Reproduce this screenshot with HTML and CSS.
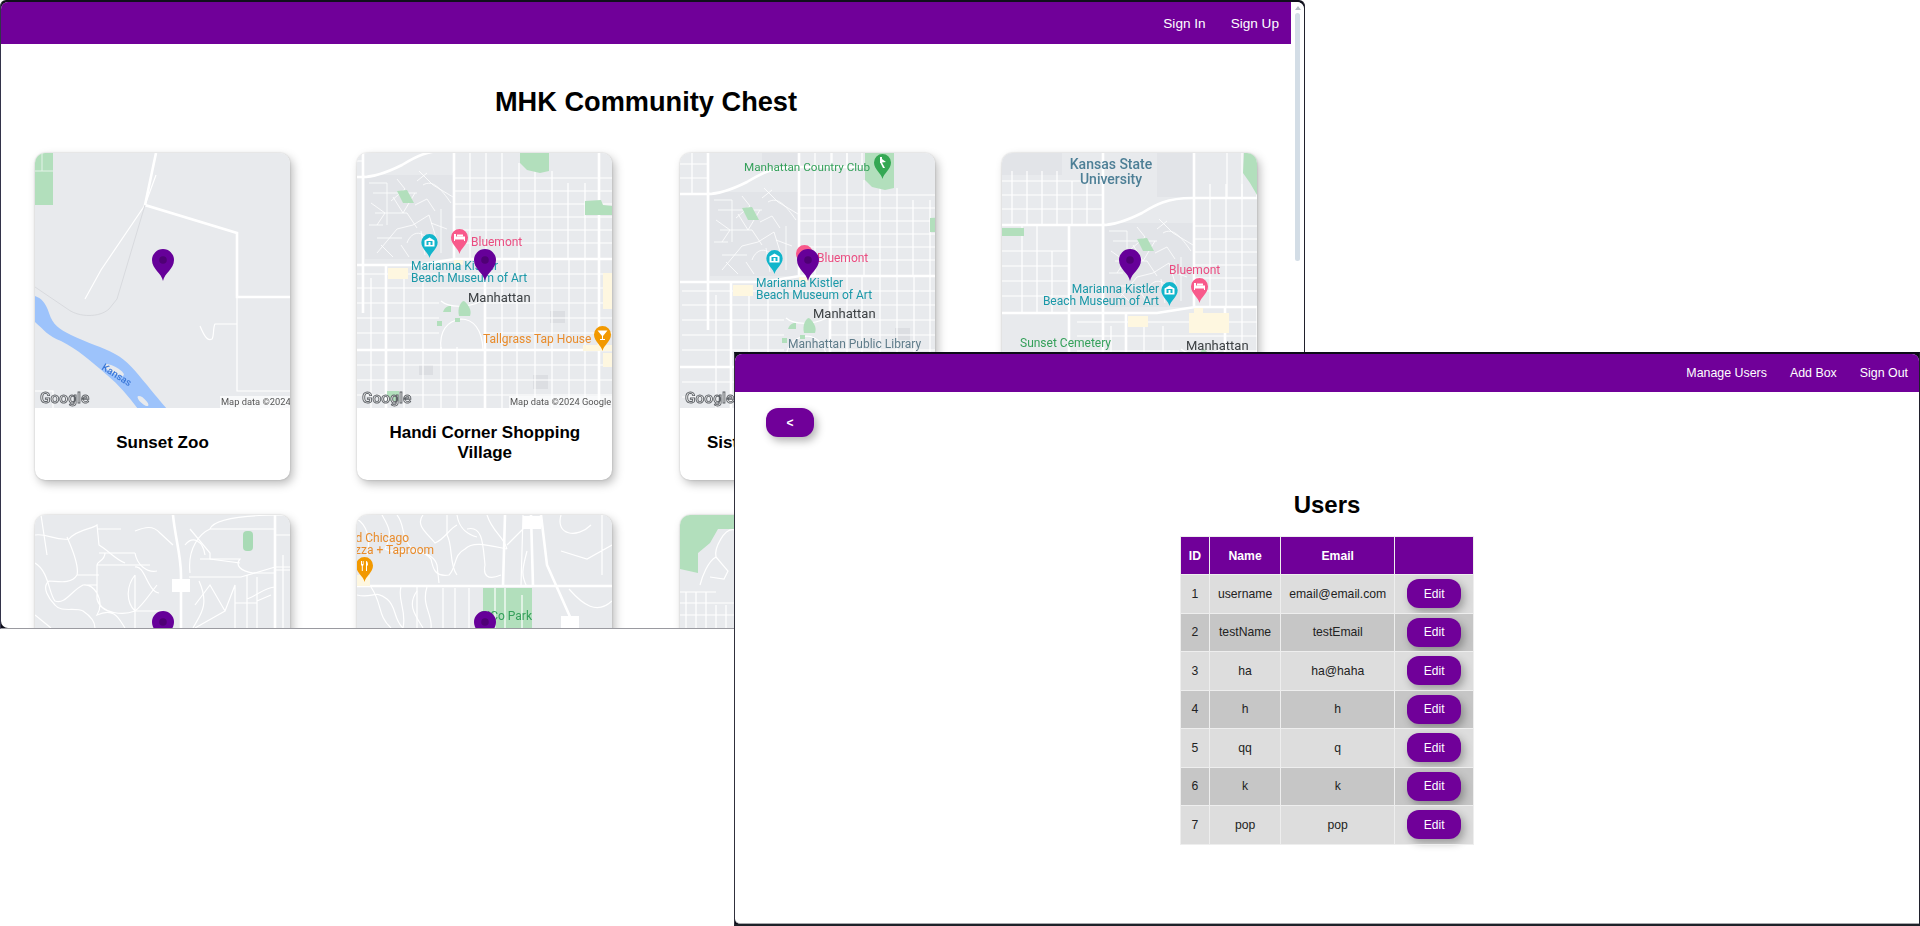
FILE: index.html
```html
<!DOCTYPE html>
<html lang="en">
<head>
<meta charset="utf-8">
<title>MHK Community Chest</title>
<link rel="stylesheet" href="styles.css">
</head>
<body>
<svg class="defs" aria-hidden="true">
  <defs>
    <symbol id="pin" viewBox="0 0 22 32" overflow="visible">
      <path class="pin-body" d="M11 32C9.500 24 0 20 0 11A11 11 0 1 1 22 11C22 20 12.500 24 11 32Z"/>
      <circle class="pin-dot" cx="11" cy="11" r="3.800"/>
    </symbol>
    <symbol id="poi-shape" viewBox="0 0 17 25">
      <path d="M8.500 25C7.500 19.500 0 15.500 0 8.500A8.500 8.500 0 1 1 17 8.500C17 15.500 9.500 19.500 8.500 25Z"/>
    </symbol>
    <g id="glyph-museum"><path class="glyph" d="M3.500 6.500 8.500 3.500 13.500 6.500V12.500H3.500Z"/><rect class="glyph-cut" x="5.500" y="7" width="6" height="4"/><rect class="glyph" x="7.500" y="8" width="2" height="3"/></g>
    <g id="glyph-bed"><path class="glyph" d="M3 5H5V7.500H14V12H13V10.500H4V12H3Z"/><rect class="glyph" x="6" y="5.500" width="6" height="2"/></g>
    <g id="glyph-bar"><path class="glyph" d="M3.500 4.500H13.500L9 10V13H11V14H6V13H8V10Z"/></g>
    <g id="glyph-golf"><path class="glyph" d="M6 3H8V5L12 8 8 8.500 11 14H9L6.500 9H6Z"/></g>
    <g id="glyph-food"><path class="glyph" d="M5 4H6V7H6.800V4H7.600V8L6.800 9V14H5.800V9L5 8ZM10 4C11.500 4 12 6 12 8.500H11V14H10Z"/></g>

    <g id="town">
      <rect class="m-campus" x="8" y="22" width="88" height="84"/>
      <rect class="m-campus" x="-95" y="-48" width="60" height="22"/>
      <rect class="m-campus" x="60" y="-48" width="36" height="44"/>
      <rect class="m-block" x="193" y="158" width="15" height="12"/>
      <rect class="m-block" x="176" y="222" width="15" height="14"/>
      <rect class="m-block" x="62" y="212" width="14" height="10"/>
      <path class="m-thin" d="M97 25H256M97 38H256M97 51H256M97 64H256M97 77H256M97 90H256M113 -17V106M129 -17V106M145 -17V106M162 10V106M178 18V106M195 18V106M211 30V106M228 30V106"/>
      <path class="m-thin" d="M-20 121H260M-20 135H260M-20 150H260M-20 165H260M-20 180H260M-20 212H260M-20 227H260M-20 242H260M145 106V260M160 106V260M178 106V260M195 106V260M212 106V260M228 106V260M47 125V260M66 125V260M84 180V260M100 180V260M14 125V260"/>
      <path class="m-thin" d="M-95 50H-28M-95 65H-28M-95 80H-28M-95 95H-28M-75 24V112M-60 24V112M-45 50V112M-85 -30V24M-70 -30V24M-55 -30V24M-40 -30V24M-25 -20V24M-10 -20V24M-95 -20H6M-95 -6H6M-95 8H6M130 -48V-3M145 -48V-3M160 -48V-3"/>
      <rect class="m-base" x="82" y="146" width="45" height="48"/>
      <path class="m-thin" d="M84 196C82 178 90 168 104 166C116 166 125 176 126 196M84 148C92 155 110 155 125 148"/>
      <path class="m-fine" d="M16 40H60M18 60H50L60 75M20 85H45M30 30V72M62 18 76 32 96 44M66 32C76 26 84 36 94 50M20 100 40 76 56 72 72 62 80 88M50 90C54 78 68 74 76 96M64 78 68 102M36 44 46 60 58 40M12 72H26M84 56V100M70 20 60 28M14 50 28 60 20 72M40 26 48 36 34 48M58 52 70 46 78 58M44 92 52 104M24 92 36 104M74 70 90 76M12 30H30"/>
      <path class="m-thick" d="M-120 24H5C20 24 35 17 45 12C58 4 70-3 95-3H170M-120 112H60L98 106H270M-60 197H270M97-60V106M6-60V160M-28 24V160M29 112V260M128 106V260M242 -30V260"/>
      <path class="m-green" d="M40 38 50 37 57 50H46Z"/>
      <path class="m-green" d="M163 -17H192V18L183 20 170 17 163 10Z"/>
      <path class="m-green" d="M228 48 244 47 246 52 256 53V62H228Z"/>
      <path class="m-green" d="M86 159C88 153 92 153 94 153V159Z"/>
      <path class="m-green" d="M102 163C100 155 104 148 107 148C112 152 115 158 113 163Z"/>
      <rect class="m-green" x="80" y="168" width="5" height="5"/>
      <rect class="m-green" x="98" y="165" width="5" height="4"/>
      <rect class="m-yellow" x="31" y="115" width="20" height="11"/>
      <rect class="m-yellow" x="97" y="107" width="9" height="5"/>
      <rect class="m-yellow" x="246" y="120" width="10" height="36"/>
      <rect class="m-yellow" x="226" y="192" width="30" height="6"/>
      <rect class="m-yellow" x="246" y="200" width="10" height="14"/>
    </g>
  </defs>
</svg>

<div class="desktop">
  <section class="window window-back">
    <div class="window-inner">
      <div class="viewport">
        <header class="topbar topbar-tall">
          <nav class="nav nav-large"><a class="nav-link">Sign In</a><a class="nav-link">Sign Up</a></nav>
        </header>
        <h1 class="page-title">MHK Community Chest</h1>
        <div class="card-grid">

          <article class="card">
            <svg class="map" viewBox="0 0 255 255">
              <rect class="m-base" width="255" height="255"/>
              <path class="m-green" d="M0 0H18V52H0Z"/>
              <path class="m-thin-light" d="M7 0V18M0 18H18"/>
              <path class="m-river" d="M0 143C6 145 11 150 14 160C18 172 24 176 36 182C52 190 68 194 80 201C92 207 100 218 112 232C120 242 126 249 132 256H103C94 244 84 232 72 222C56 208 42 196 26 188C14 184 8 176 0 169Z"/>
              <ellipse class="m-base" cx="79" cy="217" rx="11" ry="3.500" transform="rotate(28 79 217)"/>
              <ellipse class="m-base" cx="108" cy="248" rx="7" ry="2.500" transform="rotate(42 108 248)"/>
              <path class="m-thick" d="M121 0 110 52 202 80V144H255"/>
              <path class="m-thin" d="M202 144V238H255M121 22 110 52 66 117 50 146M165 173C170 185 173 188 177 186 179 184 178 174 180 171H202M0 238H18V256"/>
              <path class="m-grey-line" d="M0 134 34 157C44 164 64 165 74 156L82 146 110 52"/>
              <text class="map-label label-river" transform="translate(66 216) rotate(32)">Kansas</text>
              <rect class="attr-bg" x="185" y="243" width="70" height="12"/>
              <text class="map-attr" x="186" y="252">Map data ©2024</text>
              <text class="map-logo" x="5" y="250">Google</text>
              <use href="#pin" x="117" y="96" width="22" height="32"/>
            </svg>
            <h2 class="card-title">Sunset Zoo</h2>
          </article>

          <article class="card">
            <svg class="map" viewBox="0 0 255 255">
              <rect class="m-base" width="255" height="255"/>
              <use href="#town"/>
              <use href="#poi-shape" class="poi-teal" x="64" y="81" width="17" height="24"/>
              <use href="#glyph-museum" x="64" y="81"/>
              <use href="#poi-shape" class="poi-pink" x="94" y="76" width="17" height="25"/>
              <use href="#glyph-bed" x="94" y="76"/>
              <use href="#poi-shape" class="poi-orange" x="237" y="173" width="17" height="25"/>
              <use href="#glyph-bar" x="237" y="173"/>
              <text class="map-label label-pink" x="114" y="93">Bluemont</text>
              <text class="map-label label-teal" x="54" y="117">Marianna Kistler</text>
              <text class="map-label label-teal" x="54" y="129">Beach Museum of Art</text>
              <text class="map-label label-town" x="111" y="149">Manhattan</text>
              <text class="map-label label-orange" x="126" y="190">Tallgrass Tap House</text>
              <rect class="attr-bg" x="152" y="243" width="103" height="12"/>
              <text class="map-attr" x="153" y="252">Map data ©2024 Google</text>
              <path class="m-green" d="M30 238H42V248H30Z"/>
              <text class="map-logo" x="5" y="250">Google</text>
              <use href="#pin" x="117" y="96" width="22" height="32"/>
            </svg>
            <h2 class="card-title">Handi Corner Shopping Village</h2>
          </article>

          <article class="card">
            <svg class="map" viewBox="0 0 255 255">
              <rect class="m-base" width="255" height="255"/>
              <use href="#town" transform="translate(22 17)"/>
              <use href="#poi-shape" class="poi-green" x="194" y="1" width="17" height="25"/>
              <use href="#glyph-golf" x="194" y="1"/>
              <use href="#poi-shape" class="poi-teal" x="86" y="97" width="17" height="24"/>
              <use href="#glyph-museum" x="86" y="97"/>
              <use href="#poi-shape" class="poi-pink" x="116" y="92" width="17" height="25"/>
              <text class="map-label label-green label-tight" x="64" y="18">Manhattan Country Club</text>
              <text class="map-label label-pink" x="137" y="109">Bluemont</text>
              <text class="map-label label-teal" x="76" y="134">Marianna Kistler</text>
              <text class="map-label label-teal" x="76" y="146">Beach Museum of Art</text>
              <text class="map-label label-town" x="133" y="165">Manhattan</text>
              <text class="map-label label-slate" x="108" y="195">Manhattan Public Library</text>
              <text class="map-logo" x="5" y="250">Google</text>
              <use href="#pin" x="117" y="96" width="22" height="32"/>
            </svg>
            <h2 class="card-title">Sisters Memorial Garden</h2>
          </article>

          <article class="card">
            <svg class="map" viewBox="0 0 255 255">
              <rect class="m-base" width="255" height="255"/>
              <use href="#town" transform="translate(95 48)"/>
              <path class="m-green" d="M0 75H22V83H0Z"/>
              <path class="m-green" d="M242 0H255V42L248 30 241 20Z"/>
              <rect class="m-yellow" x="187" y="160" width="40" height="20"/>
              <use href="#poi-shape" class="poi-teal" x="159" y="129" width="17" height="24"/>
              <use href="#glyph-museum" x="159" y="129"/>
              <use href="#poi-shape" class="poi-pink" x="189" y="125" width="17" height="25"/>
              <use href="#glyph-bed" x="189" y="125"/>
              <text class="map-label label-uni" x="109" y="16">Kansas State</text>
              <text class="map-label label-uni" x="109" y="31">University</text>
              <text class="map-label label-pink" x="167" y="121">Bluemont</text>
              <text class="map-label label-teal label-end" x="157" y="140">Marianna Kistler</text>
              <text class="map-label label-teal label-end" x="157" y="152">Beach Museum of Art</text>
              <text class="map-label label-green" x="18" y="194">Sunset Cemetery</text>
              <text class="map-label label-town" x="184" y="197">Manhattan</text>
              <use href="#pin" x="117" y="96" width="22" height="32"/>
            </svg>
            <h2 class="card-title"></h2>
          </article>

          <article class="card">
            <svg class="map" viewBox="0 0 255 255">
              <rect class="m-base" width="255" height="255"/>
              <rect class="m-green-pill" x="208" y="16" width="10" height="20" rx="4"/>
              <path class="m-thin" d="M0 20C12 18 20 26 34 24C42 14 58 14 62 10L64 30C74 36 80 44 90 48M62 14H86M70 38C70 46 62 46 62 50H115M0 48C14 56 14 80 20 86C30 90 36 76 48 70H62M48 70C60 68 70 86 62 100 80 92 84 104 90 113M62 50V84C66 100 90 100 100 96C108 90 114 80 122 70M100 52C110 50 112 76 124 78M155 58C152 32 166 18 175 14 178 6 196 0 250 0M175 14H240M154 62H206L240 52H255M155 14 175 38V44L205 48M160 90 175 70 190 96 160 113M190 96 200 70V113M200 88H222M222 62V113M222 86 236 80M100 113V96"/>
              <path class="m-thin" d="M32 22C40 40 44 52 42 60C36 70 22 66 14 66C6 72 14 84 20 90C26 98 40 92 48 96C54 100 60 106 60 113M42 60H64M64 38H100M100 38C102 50 112 58 122 56M100 16C110 12 118 10 125 18L138 30M100 60V96M100 60C92 70 90 86 100 96H128M150 30C158 20 168 26 170 40M165 44H205C200 50 205 56 218 58H240M164 66C175 90 165 100 158 113M212 60V113M212 84C220 82 230 72 240 72M240 20H255M240 55H255M248 40V113M6 0 12 40M0 100 16 113"/>
              <path class="m-thick" d="M138 0C140 22 146 40 146 60V113M240 0V113"/>
              <rect class="m-road-box" x="137" y="64" width="18" height="13"/>
              <use href="#pin" x="117" y="96" width="22" height="32"/>
            </svg>
            <h2 class="card-title"></h2>
          </article>

          <article class="card">
            <svg class="map" viewBox="0 0 255 255">
              <rect class="m-base" width="255" height="255"/>
              <path class="m-green" d="M126 73H175V113H126Z"/>
              <path class="m-thin" d="M25 0C32 12 36 18 28 34 44 42 60 28 74 44 76 54 78 62 92 60 100 52 96 40 108 34 116 26 130 30 150 34M66 0C58 10 70 18 78 28 88 24 92 14 100 10M100 0C102 14 112 20 120 22M130 0C136 18 146 20 150 34M0 80C16 84 18 74 30 84 40 92 36 104 46 113M86 73V113M98 73V113M112 73V113M60 76C50 90 58 100 66 113M148 73V113M138 73V113M165 80V113M204 0C198 20 220 24 234 10M204 36 230 44 255 30M212 74C226 90 240 100 255 86M245 0V60M170 36C165 55 164 60 170 72"/>
              <path class="m-thin" d="M0 4C10 10 14 24 10 40M40 0C48 10 44 20 52 30C60 40 76 36 80 50L82 68M90 0V20C96 30 92 50 100 60M110 14C126 10 126 30 128 50C126 60 130 66 144 60M14 72C26 90 20 100 34 113M44 72C40 84 50 96 46 113M60 72V113M70 72C64 90 76 100 74 113"/>
              <path class="m-thick" d="M0 71H255M148 0 146 71M174 0 176 71M184 0 190 50 218 113"/>
              <path class="m-thin" d="M166 0 164 71M172 8 150 30"/>
              <rect class="m-road-box" x="166" y="1" width="18" height="13"/>
              <rect class="m-road-box" x="204" y="101" width="18" height="12"/>
              <rect class="m-yellow" x="0" y="60" width="13" height="11"/>
              <text class="map-label label-orange label-end" x="52" y="27">Old Chicago</text>
              <text class="map-label label-orange label-end" x="77" y="39">Pizza + Taproom</text>
              <use href="#poi-shape" class="poi-orange" x="-1" y="42" width="17" height="25"/>
              <use href="#glyph-food" x="-1" y="42"/>
              <text class="map-label label-green label-end" x="175" y="105">CiCo Park</text>
              <use href="#pin" x="117" y="96" width="22" height="32"/>
            </svg>
            <h2 class="card-title"></h2>
          </article>

          <article class="card">
            <svg class="map" viewBox="0 0 255 255">
              <rect class="m-base" width="255" height="255"/>
              <path class="m-green" d="M0 0H55V14H38L30 28 18 38V58L0 54Z"/>
              <path class="m-thin" d="M55 15C44 12 34 34 36 42 28 46 22 62 20 70M36 42 48 56 44 64 30 62M0 77H36M0 88H55M0 100H55M6 77V113M16 77V113M26 77V113M36 90V113M46 90V113"/>
            </svg>
            <h2 class="card-title"></h2>
          </article>

        </div>
      </div>
      <div class="scrollbar">
        <span class="scroll-arrow"></span>
        <span class="scroll-thumb"></span>
      </div>
    </div>
  </section>

  <section class="window window-front">
    <div class="window-inner window-column">
      <header class="topbar topbar-short">
        <nav class="nav nav-small"><a class="nav-link">Manage Users</a><a class="nav-link">Add Box</a><a class="nav-link">Sign Out</a></nav>
      </header>
      <div class="back-row"><button class="btn btn-back">&lt;</button></div>
      <h2 class="users-title">Users</h2>
      <table class="users-table">
        <thead>
          <tr><th>ID</th><th>Name</th><th>Email</th><th></th></tr>
        </thead>
        <tbody>
          <tr><td>1</td><td>username</td><td>email@email.com</td><td><button class="btn btn-edit">Edit</button></td></tr>
          <tr><td>2</td><td>testName</td><td>testEmail</td><td><button class="btn btn-edit">Edit</button></td></tr>
          <tr><td>3</td><td>ha</td><td>ha@haha</td><td><button class="btn btn-edit">Edit</button></td></tr>
          <tr><td>4</td><td>h</td><td>h</td><td><button class="btn btn-edit">Edit</button></td></tr>
          <tr><td>5</td><td>qq</td><td>q</td><td><button class="btn btn-edit">Edit</button></td></tr>
          <tr><td>6</td><td>k</td><td>k</td><td><button class="btn btn-edit">Edit</button></td></tr>
          <tr><td>7</td><td>pop</td><td>pop</td><td><button class="btn btn-edit">Edit</button></td></tr>
        </tbody>
      </table>
    </div>
  </section>
</div>
</body>
</html>
```

FILE: styles.css
```css
* { box-sizing: border-box; }
html, body { margin: 0; height: 926px; overflow: hidden; background: #fff; }
body { font-family: "Liberation Sans", Arial, sans-serif; color: #000; }

.defs { position: absolute; width: 0; height: 0; }
.desktop { position: relative; width: 1920px; height: 926px; overflow: hidden; }

/* Windows sit on a free canvas */
.window { position: absolute; background: #0c0c18; overflow: hidden; }
.window-back {
  left: 0; top: 0; width: 1305px; height: 629px;
  border-top: 2px solid #10101c; border-left: 1px solid #33334a; border-right: 1px solid #20202c; border-bottom: 1px solid #9a9aa0;
  border-radius: 6px 6px 0 0;
}
.window-front {
  left: 734px; top: 352px; width: 1186px; height: 574px;
  border-top: 2px solid #0c0c18; border-left: 1px solid #30303c; border-right: 1px solid #20202c; border-bottom: 2px solid #1e2229;
}
.window-inner { display: flex; width: 100%; height: 100%; background: #fff; border-radius: 7px 7px 0 7px; overflow: hidden; }
.window-column { flex-direction: column; align-items: stretch; border-bottom: 1px solid #a8a8ac; border-radius: 7px 7px 0 5px; }

.viewport { flex: 1; min-width: 0; height: 100%; overflow: hidden; }

.scrollbar { flex: 0 0 13px; display: flex; flex-direction: column; align-items: center; background: #fff; padding-top: 4px; gap: 3px; }
.scroll-arrow { width: 0; height: 0; border-left: 3px solid transparent; border-right: 3px solid transparent; border-bottom: 4px solid #b4bcc4; }
.scroll-thumb { width: 5px; height: 248px; border-radius: 3px; background: #d3dde6; }

/* Top bars */
.topbar { background: #700099; display: flex; justify-content: flex-end; align-items: center; flex: none; }
.topbar-tall { height: 42px; padding-right: 12px; }
.topbar-short { height: 38px; padding-right: 11px; }
.nav { display: flex; color: #fff; }
.nav-large { gap: 25px; font-size: 13.600px; }
.nav-small { gap: 23px; font-size: 12.400px; }
.nav-link { color: #fff; }

.page-title { margin: 42px 0 35px; font-size: 27.200px; line-height: 32px; font-weight: 700; text-align: center; color: #000; }

/* Cards */
.card-grid { display: grid; grid-template-columns: repeat(4, 255px); justify-content: space-between; row-gap: 35px; padding: 0 34px; }
.card { height: 327px; background: #fff; border-radius: 10px; overflow: hidden; display: flex; flex-direction: column; box-shadow: 3px 4px 10px rgba(0,0,0,.26), 0 0 2px rgba(0,0,0,.2); }
.map { display: block; width: 255px; height: 255px; flex: none; filter: blur(.35px); }
.card-title { flex: 1; margin: 0; padding: 0 16px 2px; display: flex; align-items: center; justify-content: center; text-align: center; font-size: 17px; line-height: 20px; font-weight: 700; color: #000; }

/* Map paint */
.m-base { fill: #e8eaed; }
.m-campus { fill: #e2e4e8; }
.m-block { fill: #dcdee2; }
.m-green { fill: #b2dfbc; }
.m-green-pill { fill: #a8dab5; }
.m-yellow { fill: #fef7e0; }
.m-river { fill: #9dc3fb; }
.m-road-box { fill: #fff; }
.m-thick { fill: none; stroke: #fff; stroke-width: 2.600; }
.m-thin { fill: none; stroke: #fff; stroke-width: 1.200; }
.m-fine { fill: none; stroke: #fff; stroke-width: .8; }
.m-thin-light { fill: none; stroke: #e4f3e8; stroke-width: 1; }
.m-grey-line { fill: none; stroke: #d8dade; stroke-width: 1; }
.attr-bg { fill: rgba(255,255,255,.7); }

.pin-body { fill: #660099; }
.pin-dot { fill: #4f0075; }
.poi-teal { fill: #12b5cb; }
.poi-pink { fill: #f8598b; }
.poi-orange { fill: #f29900; }
.poi-green { fill: #34a853; }
.glyph { fill: #fff; }
.glyph-cut { fill: #12b5cb; }

.map-label { font-family: Roboto, "Liberation Sans", sans-serif; font-size: 12px; }
.label-end { text-anchor: end; }
.label-tight { font-size: 11.700px; }
.label-pink { fill: #ea4c80; }
.label-teal { fill: #1a98a8; }
.label-town { fill: #3c4043; font-size: 13px; }
.label-orange { fill: #e98c2c; }
.label-green { fill: #34a05a; }
.label-slate { fill: #5f7c8a; }
.label-uni { fill: #4d7f96; font-size: 14px; font-weight: 500; text-anchor: middle; }
.label-river { fill: #3b78d8; font-size: 10px; font-weight: 500; }
.map-attr { font-family: Roboto, "Liberation Sans", sans-serif; font-size: 9.300px; fill: #555; }
.map-logo { font-family: Roboto, "Liberation Sans", sans-serif; font-size: 15.500px; font-weight: 500; fill: #f4f4f4; stroke: #5f6368; stroke-width: .9; }

/* Buttons */
.btn { border: 0; background: #700099; color: #fff; font-family: "Liberation Sans", Arial, sans-serif; border-radius: 12px; box-shadow: 3px 4px 8px rgba(0,0,0,.3); padding: 0; }
.back-row { display: flex; padding: 16px 0 0 31px; }
.btn-back { width: 48px; height: 29px; font-size: 12px; font-weight: 700; }
.btn-edit { display: block; width: 54px; height: 29px; font-size: 12px; margin: 0 auto; }

/* Users */
.users-title { margin: 54px 0 17px; font-size: 24px; line-height: 28px; font-weight: 700; text-align: center; color: #000; }
.users-table { border-collapse: collapse; align-self: center; font-size: 12.200px; }
.users-table th, .users-table td { border: 1px solid #eee; padding: 4.280px 8px; text-align: center; }
.users-table th { background: #700099; color: #fff; font-weight: 700; height: 38px; }
.users-table td { color: #222; }
.users-table td:last-child { padding: 4.280px 12px; }
.users-table tbody tr:nth-child(odd) td { background: #ddd; }
.users-table tbody tr:nth-child(even) td { background: #c6c6c6; }
```
